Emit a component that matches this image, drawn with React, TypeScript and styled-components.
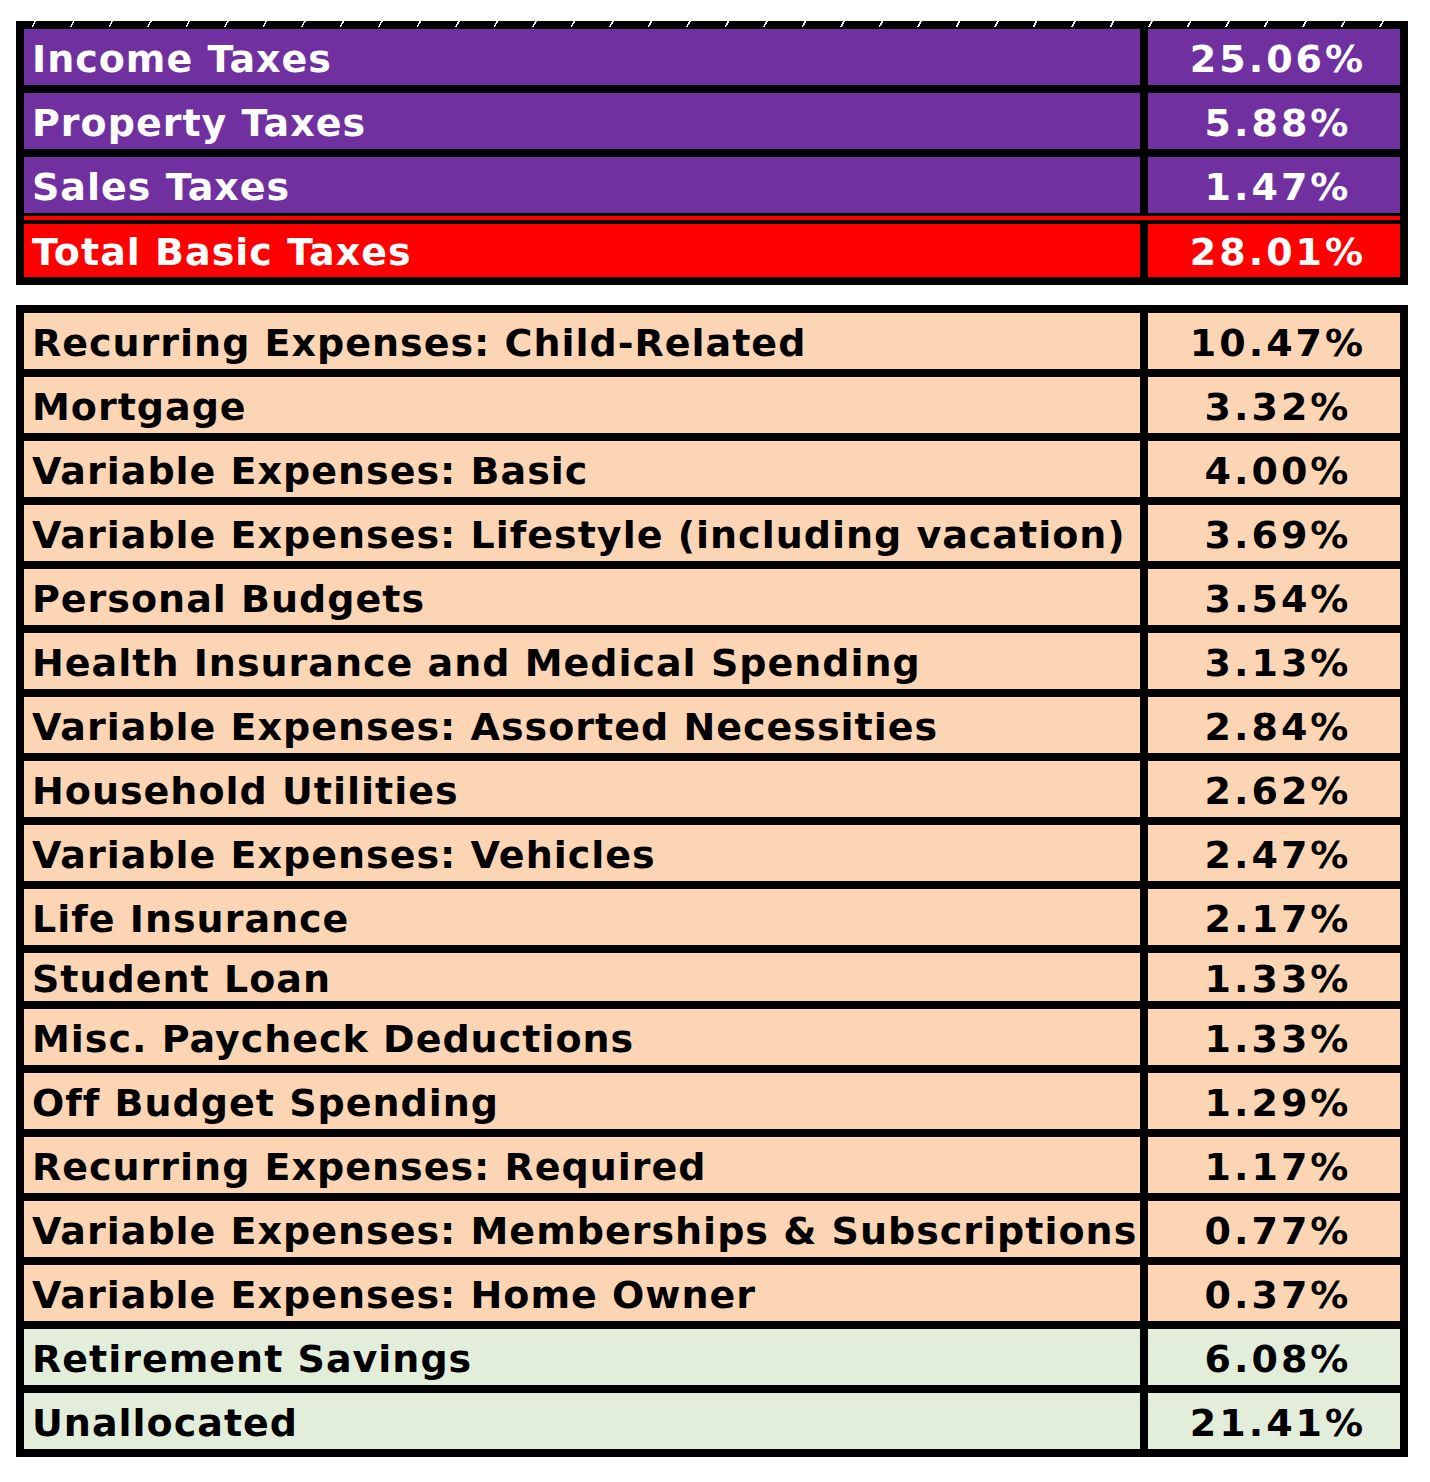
import React from "react";
import styled, { createGlobalStyle } from "styled-components";

const GlobalStyle = createGlobalStyle`
  html, body {
    margin: 0;
    padding: 0;
    background: #ffffff;
  }
  body {
    font-family: "DejaVu Sans", Verdana, sans-serif;
  }
`;

const Page = styled.div`
  display: flex;
  flex-direction: column;
  gap: 20px;
  padding: 21px 0 0 16px;
  width: 1392px;
`;

const Table = styled.div<{ $hatch?: boolean }>`
  position: relative;
  display: flex;
  flex-direction: column;
  border: 8px solid #000;
  background: #000;
  width: 1376px;
  &::before {
    content: "";
    display: ${(p) => (p.$hatch ? "block" : "none")};
    position: absolute;
    left: -8px;
    right: -8px;
    top: -8px;
    height: 6px;
    background: repeating-linear-gradient(
      -62deg,
      transparent 0px,
      transparent 24px,
      rgba(255, 255, 255, 0.95) 24px,
      rgba(255, 255, 255, 0.95) 25.5px,
      transparent 25.5px,
      transparent 34px
    );
    pointer-events: none;
  }
`;

const Row = styled.div<{ $h: number; $first?: boolean }>`
  display: grid;
  grid-template-columns: 1116px 252px;
  column-gap: 8px;
  height: ${(p) => p.$h}px;
  border-top: ${(p) => (p.$first ? "0" : "8px solid #000")};
  background: #000;
  box-sizing: content-box;
`;

const TotalBlock = styled.div`
  display: flex;
  flex-direction: column;
  border-top: 3px solid #000;
`;

const RedRule = styled.div`
  height: 4px;
  background: #ff0000;
`;

const TotalRow = styled.div`
  display: grid;
  grid-template-columns: 1116px 252px;
  column-gap: 8px;
  height: 53px;
  border-top: 4px solid #000;
  background: #000;
`;

const Cell = styled.div<{ $bg: string; $fg: string; $align: "left" | "center" }>`
  display: flex;
  align-items: center;
  justify-content: ${(p) => (p.$align === "center" ? "center" : "flex-start")};
  padding: 3px 0 0 ${(p) => (p.$align === "center" ? "8px" : "8px")};
  box-sizing: border-box;
  background: ${(p) => p.$bg};
  color: ${(p) => p.$fg};
  font-family: "DejaVu Sans", Verdana, sans-serif;
  font-weight: bold;
  font-size: 38px;
  letter-spacing: ${(p) => (p.$align === "center" ? "3px" : "1px")};
  white-space: nowrap;
  overflow: hidden;
`;

const PURPLE = "#7030a0";
const RED = "#ff0000";
const PEACH = "#fcd5b4";
const GREEN = "#e2eeda";

type Item = { label: string; value: string; bg: string; fg: string; h?: number };

const taxes: Item[] = [
  { label: "Income Taxes", value: "25.06%", bg: PURPLE, fg: "#fff" },
  { label: "Property Taxes", value: "5.88%", bg: PURPLE, fg: "#fff" },
  { label: "Sales Taxes", value: "1.47%", bg: PURPLE, fg: "#fff" },
];

const expenses: Item[] = [
  { label: "Recurring Expenses: Child-Related", value: "10.47%", bg: PEACH, fg: "#000" },
  { label: "Mortgage", value: "3.32%", bg: PEACH, fg: "#000" },
  { label: "Variable Expenses: Basic", value: "4.00%", bg: PEACH, fg: "#000" },
  { label: "Variable Expenses: Lifestyle (including vacation)", value: "3.69%", bg: PEACH, fg: "#000" },
  { label: "Personal Budgets", value: "3.54%", bg: PEACH, fg: "#000" },
  { label: "Health Insurance and Medical Spending", value: "3.13%", bg: PEACH, fg: "#000" },
  { label: "Variable Expenses: Assorted Necessities", value: "2.84%", bg: PEACH, fg: "#000" },
  { label: "Household Utilities", value: "2.62%", bg: PEACH, fg: "#000" },
  { label: "Variable Expenses: Vehicles", value: "2.47%", bg: PEACH, fg: "#000" },
  { label: "Life Insurance", value: "2.17%", bg: PEACH, fg: "#000" },
  { label: "Student Loan", value: "1.33%", bg: PEACH, fg: "#000", h: 48 },
  { label: "Misc. Paycheck Deductions", value: "1.33%", bg: PEACH, fg: "#000" },
  { label: "Off Budget Spending", value: "1.29%", bg: PEACH, fg: "#000" },
  { label: "Recurring Expenses: Required", value: "1.17%", bg: PEACH, fg: "#000" },
  { label: "Variable Expenses: Memberships & Subscriptions", value: "0.77%", bg: PEACH, fg: "#000" },
  { label: "Variable Expenses: Home Owner", value: "0.37%", bg: PEACH, fg: "#000" },
  { label: "Retirement Savings", value: "6.08%", bg: GREEN, fg: "#000" },
  { label: "Unallocated", value: "21.41%", bg: GREEN, fg: "#000" },
];

function DataRow({ item, first }: { item: Item; first?: boolean }) {
  return (
    <Row $h={item.h ?? 56} $first={first}>
      <Cell $bg={item.bg} $fg={item.fg} $align="left">{item.label}</Cell>
      <Cell $bg={item.bg} $fg={item.fg} $align="center">{item.value}</Cell>
    </Row>
  );
}

export default function App() {
  return (
    <>
      <GlobalStyle />
      <Page>
        <Table $hatch>
          {taxes.map((t, i) => (
            <DataRow key={t.label} item={t} first={i === 0} />
          ))}
          <TotalBlock>
            <RedRule />
            <TotalRow>
              <Cell $bg={RED} $fg="#fff" $align="left">Total Basic Taxes</Cell>
              <Cell $bg={RED} $fg="#fff" $align="center">28.01%</Cell>
            </TotalRow>
          </TotalBlock>
        </Table>
        <Table>
          {expenses.map((e, i) => (
            <DataRow key={e.label + i} item={e} first={i === 0} />
          ))}
        </Table>
      </Page>
    </>
  );
}
